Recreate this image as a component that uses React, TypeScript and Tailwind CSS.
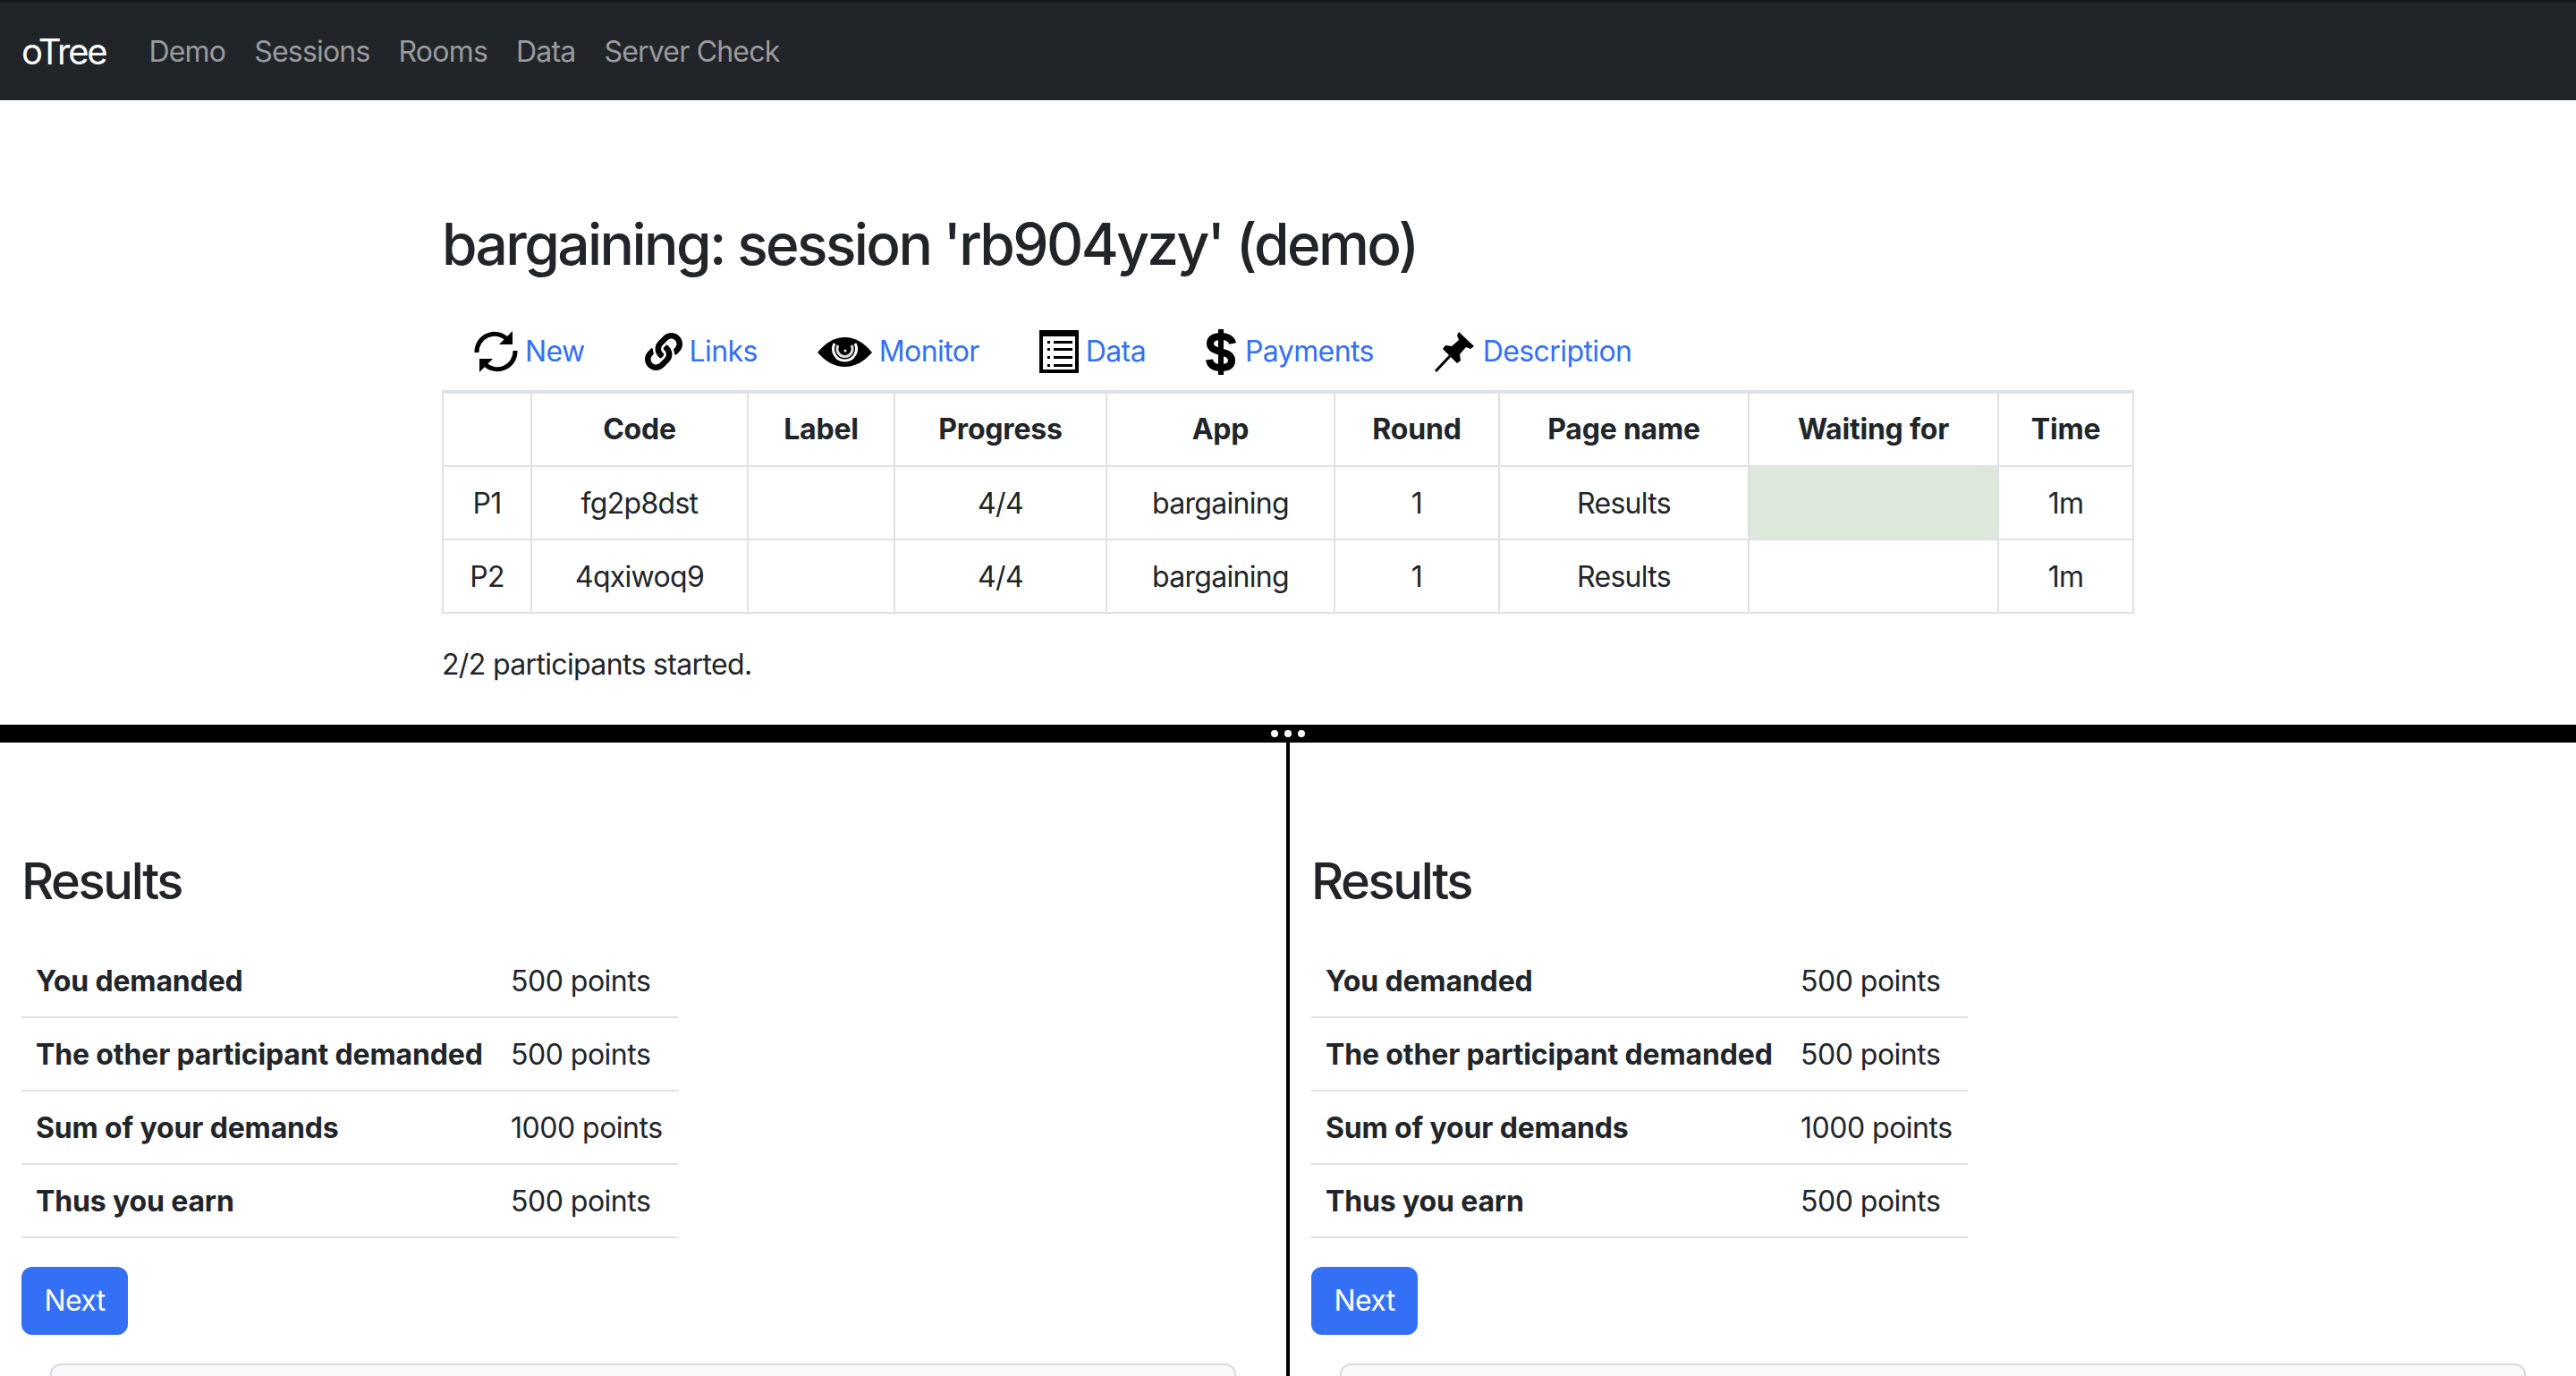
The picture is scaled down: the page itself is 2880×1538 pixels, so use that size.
import { FaLink } from "react-icons/fa";

const font = "font-['Inter','Liberation_Sans',sans-serif]";

function RefreshIcon() {
  return (
    <svg viewBox="0 0 50 50" className="h-[50px] w-[50px]">
      <path d="M4 26A20 20 0 0 1 38 11" fill="none" stroke="#000" strokeWidth="5" />
      <path d="M47 24A20 20 0 0 1 13 39" fill="none" stroke="#000" strokeWidth="5" />
      <path d="M44 2v15H29z" fill="#000" />
      <path d="M7 48V33h15z" fill="#000" />
    </svg>
  );
}

function EyeIcon() {
  return (
    <svg viewBox="0 0 61 33" className="h-[33px] w-[61px]">
      <path d="M0 17C10 5 20 0 30.5 0S51 5 61 17C51 28 41 33 30.5 33S10 28 0 17z" fill="#000" />
      <path d="M19 7A13 13 0 1 0 42 7" fill="none" stroke="#fff" strokeWidth="3" />
      <path d="M23 9A8.5 8.5 0 1 0 38 9" fill="none" stroke="#ddd" strokeWidth="3" />
      <circle cx="31" cy="15" r="1.5" fill="#fff" />
    </svg>
  );
}

function ListIcon() {
  return (
    <svg viewBox="0 0 44 48" className="h-[48px] w-[44px]">
      <path d="M0 0h44v48H0z" fill="#000" />
      <path d="M4 7h36v37H4z" fill="#fff" />
      {[12, 20, 29, 38].map((y) => (
        <g key={y}>
          <path d={`M9 ${y}h3v3H9z`} fill="#000" />
          <path d={`M16 ${y}h21v3H16z`} fill="#000" />
        </g>
      ))}
    </svg>
  );
}

function DollarIcon() {
  return (
    <svg viewBox="0 0 34 51" className="h-[51px] w-[34px]">
      <path d="M30 16C29 10 23 8 17 8C9 8 5 11 5 16C5 28 29 22 29 35C29 41 24 43 17 43C10 43 5 41 4 34" fill="none" stroke="#000" strokeWidth="8" />
      <path d="M17 0V51" fill="none" stroke="#000" strokeWidth="6" />
    </svg>
  );
}

function PinIcon() {
  return (
    <svg viewBox="0 0 45 46" className="h-[46px] w-[45px]">
      <path d="M28 1L45 17L41 20L36 18L29 26L30 33L26 36L10 20L13 16L20 17L28 10L26 5Z" fill="#000" />
      <path d="M18 28L2 45" fill="none" stroke="#000" strokeWidth="3" />
    </svg>
  );
}

const links = [
  { label: "New", gap: "gap-2", icon: <RefreshIcon /> },
  { label: "Links", gap: "gap-2", icon: <FaLink className="h-[46px] w-[42px]" /> },
  { label: "Monitor", gap: "gap-2", icon: <EyeIcon /> },
  { label: "Data", gap: "gap-2", icon: <ListIcon /> },
  { label: "Payments", gap: "gap-2.5", icon: <DollarIcon /> },
  { label: "Description", gap: "gap-2.5", icon: <PinIcon /> },
];

const participants = [
  { id: "P1", code: "fg2p8dst", waiting: "bg-[#dde9da]" },
  { id: "P2", code: "4qxiwoq9", waiting: "" },
];

const headers = ["", "Code", "Label", "Progress", "App", "Round", "Page name", "Waiting for", "Time"];
const widths = ["w-[99px]", "w-[242px]", "w-[164px]", "w-[237px]", "w-[255px]", "w-[184px]", "w-[279px]", "w-[279px]", "w-[151px]"];

const results = [
  ["You demanded", "500 points"],
  ["The other participant demanded", "500 points"],
  ["Sum of your demands", "1000 points"],
  ["Thus you earn", "500 points"],
];

function ResultsPane() {
  return (
    <div className="flex-1 px-6 pt-[122px]">
      <h3 className="text-[56px] leading-[67px] font-[550] tracking-[-2.4px] text-[#212529]">Results</h3>
      <table className="mt-[37px] w-[734px] table-fixed border-collapse text-[32px] leading-[48px] tracking-[-0.5px] text-[#212529]">
        <tbody>
          {results.map(([name, value]) => (
            <tr key={name} className="border-b-2 border-[#dee2e6]">
              <th className="w-[531px] px-4 pt-[17px] pb-[15px] text-left font-bold tracking-[-0.15px] whitespace-nowrap">{name}</th>
              <td className="px-4 pt-[17px] pb-[15px] whitespace-nowrap">{value}</td>
            </tr>
          ))}
        </tbody>
      </table>
      <button className="mt-[32px] h-[76px] w-[119px] rounded-xl bg-[#3470f6] text-[32px] tracking-[-0.6px] text-white">Next</button>
      <div className="mt-[32px] ml-[32px] mr-[32px] h-[200px] rounded-xl border-2 border-[#d9dadb] bg-[#f8f9fa]" />
    </div>
  );
}

export default function App() {
  return (
    <div className={`${font} h-[1538px] overflow-hidden bg-white`}>
      <nav className="flex h-[112px] items-center border-t-[3px] border-[#17191c] bg-[#212529] pl-6">
        <span className="mr-[32px] text-[40px] tracking-[-2.2px] text-white">oTree</span>
        {["Demo", "Sessions", "Rooms", "Data", "Server Check"].map((item) => (
          <a key={item} className="px-4 text-[32px] tracking-[-0.8px] text-[#999b9d]">{item}</a>
        ))}
      </nav>

      <div className="h-[698px] pl-[494px]">
        <h2 className="pt-[122px] text-[64px] leading-[77px] font-[550] tracking-[-2.6px] text-[#212529]">
          bargaining: session 'rb904yzy' (demo)
        </h2>
        <div className="mt-[55px] flex h-[54px] items-center gap-[67px] pl-[35px]">
          {links.map((l) => (
            <div key={l.label} className={`flex items-center ${l.gap}`}>
              {l.icon}
              <a className="text-[32px] tracking-[-0.6px] text-[#3470f6]">{l.label}</a>
            </div>
          ))}
        </div>
        <table className="mt-[16px] w-[1890px] table-fixed border-collapse border-t-4 border-[#dee2e6] text-center text-[32px] leading-[48px] tracking-[-0.7px] text-[#212529]">
          <thead>
            <tr>
              {headers.map((h, i) => (
                <th key={i} className={`border-2 border-[#dee2e6] p-4 font-bold tracking-[-0.2px] ${widths[i]}`}>
                  {h}
                </th>
              ))}
            </tr>
          </thead>
          <tbody>
            {participants.map((p) => (
              <tr key={p.id}>
                <td className="border-2 border-[#dee2e6] px-4 pt-[17px] pb-[15px]">{p.id}</td>
                <td className="border-2 border-[#dee2e6] px-4 pt-[17px] pb-[15px]">{p.code}</td>
                <td className="border-2 border-[#dee2e6] px-4 pt-[17px] pb-[15px]"></td>
                <td className="border-2 border-[#dee2e6] px-4 pt-[17px] pb-[15px]">4/4</td>
                <td className="border-2 border-[#dee2e6] px-4 pt-[17px] pb-[15px]">bargaining</td>
                <td className="border-2 border-[#dee2e6] px-4 pt-[17px] pb-[15px]">1</td>
                <td className="border-2 border-[#dee2e6] px-4 pt-[17px] pb-[15px]">Results</td>
                <td className={`border-2 border-[#dee2e6] px-4 pt-[17px] pb-[15px] ${p.waiting}`}></td>
                <td className="border-2 border-[#dee2e6] px-4 pt-[17px] pb-[15px]">1m</td>
              </tr>
            ))}
          </tbody>
        </table>
        <p className="mt-[33px] text-[32px] leading-[48px] tracking-[-0.65px] text-[#212529]">2/2 participants started.</p>
      </div>

      <div className="flex h-5 items-center justify-center gap-[7px] bg-black">
        <span className="h-2 w-2 rounded-full bg-white" />
        <span className="h-2 w-2 rounded-full bg-white" />
        <span className="h-2 w-2 rounded-full bg-white" />
      </div>

      <div className="flex h-[708px]">
        <ResultsPane />
        <div className="w-1 bg-black" />
        <ResultsPane />
      </div>
    </div>
  );
}
